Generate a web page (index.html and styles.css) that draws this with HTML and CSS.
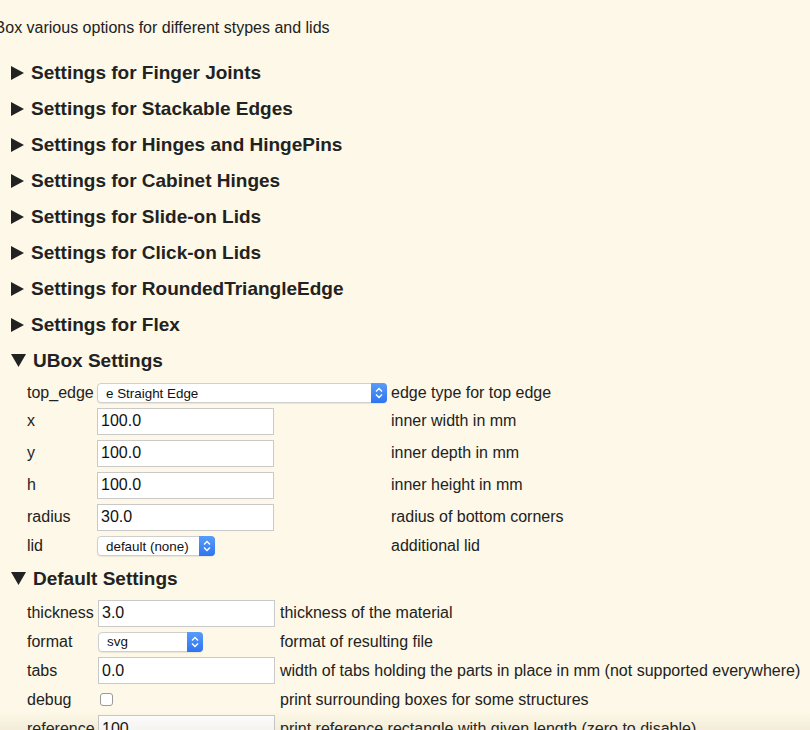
FILE: index.html
```html
<!DOCTYPE html>
<html>
<head>
<meta charset="utf-8">
<link rel="stylesheet" href="styles.css">
</head>
<body>
<div class="page">
  <p class="intro">UBox various options for different stypes and lids</p>

  <div class="section"><div class="summary"><svg class="tri" width="14" height="14" viewBox="0 0 14 14"><path d="M0 0 L13 7 L0 14 Z"/></svg><span>Settings for Finger Joints</span></div></div>
  <div class="section"><div class="summary"><svg class="tri" width="14" height="14" viewBox="0 0 14 14"><path d="M0 0 L13 7 L0 14 Z"/></svg><span>Settings for Stackable Edges</span></div></div>
  <div class="section"><div class="summary"><svg class="tri" width="14" height="14" viewBox="0 0 14 14"><path d="M0 0 L13 7 L0 14 Z"/></svg><span>Settings for Hinges and HingePins</span></div></div>
  <div class="section"><div class="summary"><svg class="tri" width="14" height="14" viewBox="0 0 14 14"><path d="M0 0 L13 7 L0 14 Z"/></svg><span>Settings for Cabinet Hinges</span></div></div>
  <div class="section"><div class="summary"><svg class="tri" width="14" height="14" viewBox="0 0 14 14"><path d="M0 0 L13 7 L0 14 Z"/></svg><span>Settings for Slide-on Lids</span></div></div>
  <div class="section"><div class="summary"><svg class="tri" width="14" height="14" viewBox="0 0 14 14"><path d="M0 0 L13 7 L0 14 Z"/></svg><span>Settings for Click-on Lids</span></div></div>
  <div class="section"><div class="summary"><svg class="tri" width="14" height="14" viewBox="0 0 14 14"><path d="M0 0 L13 7 L0 14 Z"/></svg><span>Settings for RoundedTriangleEdge</span></div></div>
  <div class="section"><div class="summary"><svg class="tri" width="14" height="14" viewBox="0 0 14 14"><path d="M0 0 L13 7 L0 14 Z"/></svg><span>Settings for Flex</span></div></div>

  <div class="section open">
    <div class="summary"><svg class="tri" width="15" height="14" viewBox="0 0 15 14"><path d="M0 0 L15 0 L7.5 13 Z"/></svg><span>UBox Settings</span></div>
    <div class="grid">
      <div class="lbl r24">top_edge</div>
      <div class="r24"><div class="sel wide"><span class="val">e Straight Edge</span><span class="arrow"><svg width="8" height="12" viewBox="0 0 8 12"><path d="M1 4.5 L4 1.5 L7 4.5 M1 7.5 L4 10.5 L7 7.5" fill="none" stroke="#fff" stroke-width="1.4"/></svg></span></div></div>
      <div class="desc r24">edge type for top edge</div>

      <div class="lbl r32">x</div>
      <div class="r32"><div class="inp">100.0</div></div>
      <div class="desc r32">inner width in mm</div>

      <div class="lbl r32">y</div>
      <div class="r32"><div class="inp">100.0</div></div>
      <div class="desc r32">inner depth in mm</div>

      <div class="lbl r32">h</div>
      <div class="r32"><div class="inp">100.0</div></div>
      <div class="desc r32">inner height in mm</div>

      <div class="lbl r32">radius</div>
      <div class="r32"><div class="inp">30.0</div></div>
      <div class="desc r32">radius of bottom corners</div>

      <div class="lbl r26">lid</div>
      <div class="r26"><div class="sel lid"><span class="val">default (none)</span><span class="arrow"><svg width="8" height="12" viewBox="0 0 8 12"><path d="M1 4.5 L4 1.5 L7 4.5 M1 7.5 L4 10.5 L7 7.5" fill="none" stroke="#fff" stroke-width="1.4"/></svg></span></div></div>
      <div class="desc r26">additional lid</div>
    </div>
  </div>

  <div class="section open">
    <div class="summary"><svg class="tri" width="15" height="14" viewBox="0 0 15 14"><path d="M0 0 L15 0 L7.5 13 Z"/></svg><span>Default Settings</span></div>
    <div class="grid grid2">
      <div class="lbl r28">thickness</div>
      <div class="r28"><div class="inp">3.0</div></div>
      <div class="desc r28">thickness of the material</div>

      <div class="lbl r29">format</div>
      <div class="r29"><div class="sel fmt"><span class="val">svg</span><span class="arrow"><svg width="8" height="12" viewBox="0 0 8 12"><path d="M1 4.5 L4 1.5 L7 4.5 M1 7.5 L4 10.5 L7 7.5" fill="none" stroke="#fff" stroke-width="1.4"/></svg></span></div></div>
      <div class="desc r29">format of resulting file</div>

      <div class="lbl r29">tabs</div>
      <div class="r29"><div class="inp">0.0</div></div>
      <div class="desc r29">width of tabs holding the parts in place in mm (not supported everywhere)</div>

      <div class="lbl r29">debug</div>
      <div class="r29"><div class="chk"></div></div>
      <div class="desc r29">print surrounding boxes for some structures</div>

      <div class="lbl r29">reference</div>
      <div class="r29"><div class="inp">100</div></div>
      <div class="desc r29">print reference rectangle with given length (zero to disable)</div>
    </div>
  </div>
</div>
<div class="fade"></div>
</body>
</html>
```

FILE: styles.css
```css
html, body {
  margin: 0;
  padding: 0;
  background: #fdf8e7;
  overflow: hidden;
}
body {
  font-family: "Liberation Sans", Arial, Helvetica, sans-serif;
  font-size: 16px;
  color: #222;
  width: 810px;
  height: 730px;
}
.page {
  padding-top: 19px;
}
.intro {
  margin: 0 0 18px -17px;
  line-height: 18px;
  height: 18px;
  white-space: nowrap;
}
.summary {
  height: 36px;
  display: flex;
  align-items: center;
  font-weight: bold;
  font-size: 19px;
  padding-left: 11px;
  white-space: nowrap;
}
.summary .tri {
  fill: #222;
  margin-right: 6px;
  flex: none;
}
.open .summary .tri {
  margin-right: 7px;
}
.grid {
  display: grid;
  grid-template-columns: 66px max-content 1fr;
  column-gap: 4px;
  padding-left: 27px;
  margin-top: 2px;
  margin-bottom: 2px;
}
.grid2 {
  grid-template-columns: 66px max-content 1fr;
  column-gap: 5px;
  margin-top: 2px;
}
.grid > div {
  display: flex;
  align-items: center;
  white-space: nowrap;
}
.r24 { height: 24px; }
.r26 { height: 26px; }
.r28 { height: 28px; }
.r29 { height: 29px; }
.r32 { height: 32px; }
.inp {
  box-sizing: border-box;
  width: 177px;
  height: 27px;
  background: #fff;
  border: 1px solid #c9c9c9;
  padding: 0 3px;
  display: flex;
  align-items: center;
  font-size: 16px;
  color: #111;
}
.sel {
  box-sizing: border-box;
  position: relative;
  height: 20px;
  background: #fff;
  border: 1px solid #cfcfcf;
  border-radius: 4px;
  font-size: 13.4px;
  color: #111;
  display: flex;
  align-items: center;
  padding-left: 8px;
  box-shadow: 0 1px 1px rgba(0,0,0,0.08);
}
.sel.wide { width: 290px; }
.sel.lid { width: 118px; }
.sel.fmt { width: 105px; }
.sel .arrow {
  position: absolute;
  right: -1px;
  top: -1px;
  bottom: -1px;
  width: 16px;
  border-radius: 0 4px 4px 0;
  background: linear-gradient(#5a9cf9, #2f74f0);
  display: flex;
  align-items: center;
  justify-content: center;
}
.chk {
  box-sizing: border-box;
  width: 13px;
  height: 13px;
  margin-left: 2px;
  background: #fff;
  border: 1px solid #9a9a9a;
  border-radius: 3px;
}
.desc {
  color: #222;
}
.fade {
  position: fixed;
  left: 0;
  right: 0;
  bottom: 0;
  height: 18px;
  background: linear-gradient(rgba(120,100,60,0), rgba(120,100,60,0.08));
  pointer-events: none;
}
```
